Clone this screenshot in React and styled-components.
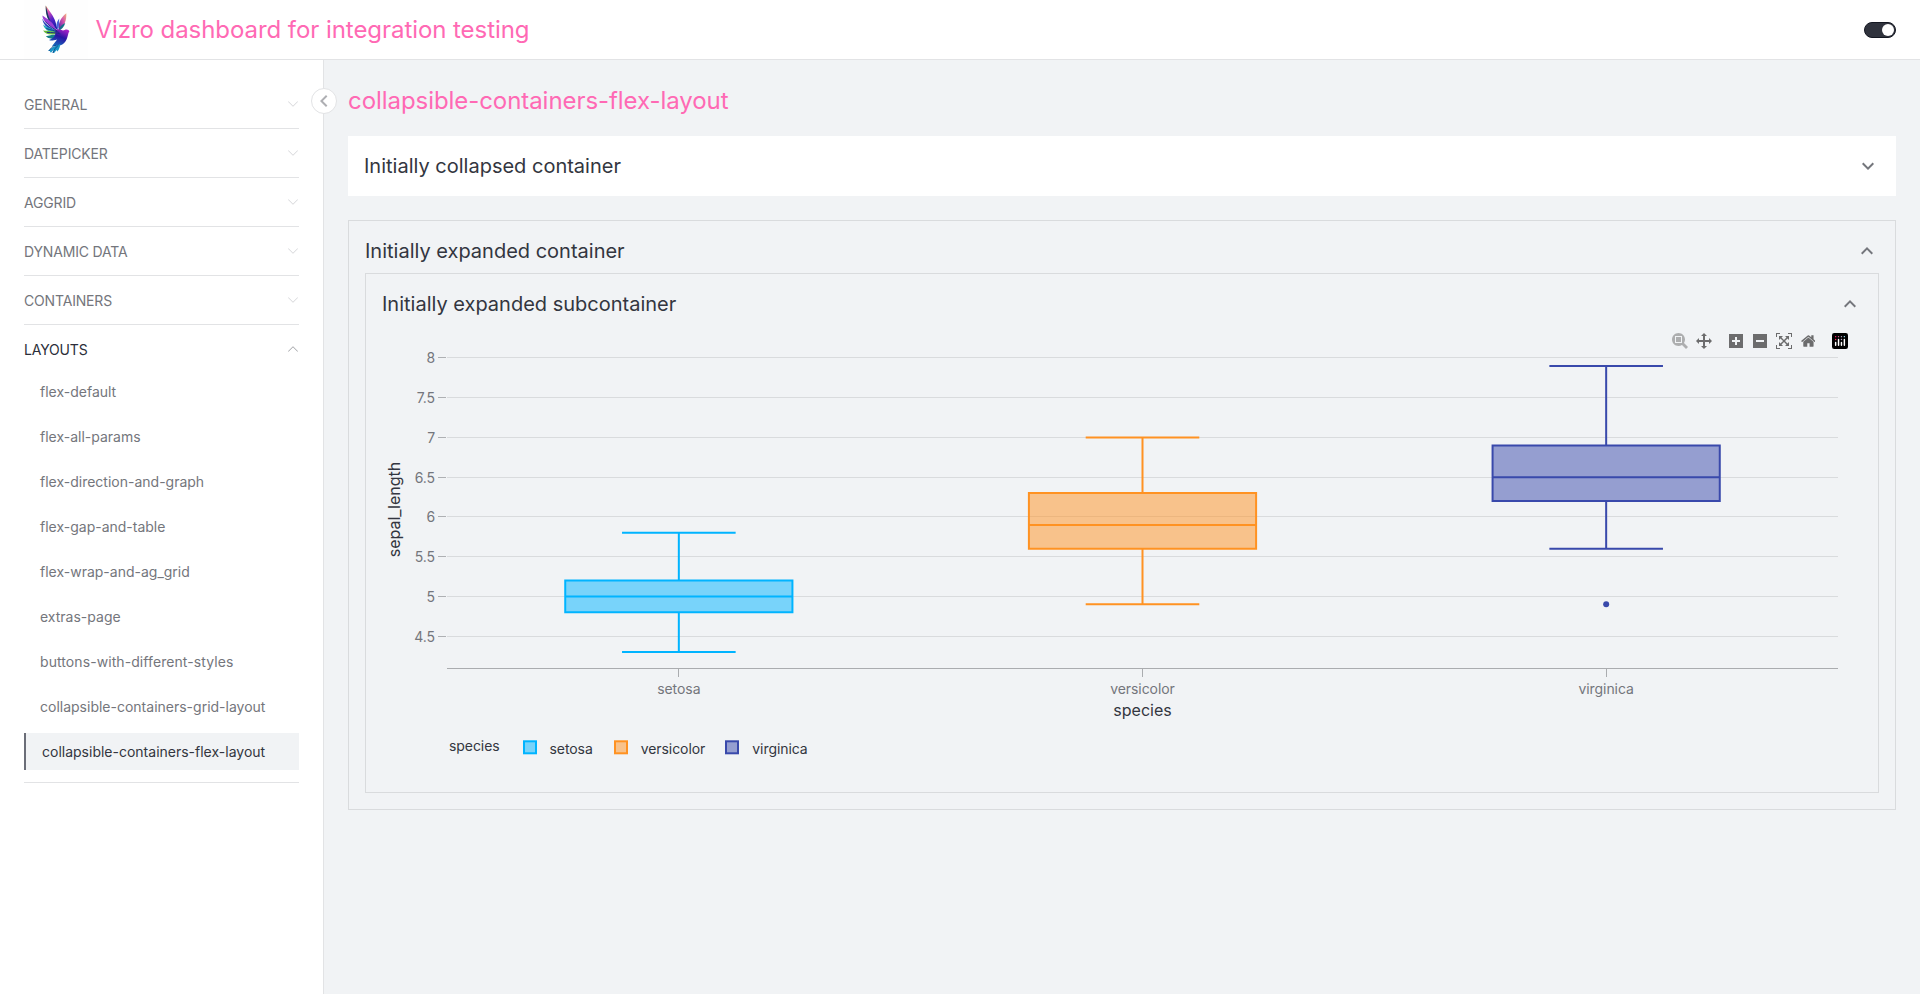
import React from "react";
import styled, { createGlobalStyle } from "styled-components";

const GlobalStyle = createGlobalStyle`
  *, *::before, *::after { box-sizing: border-box; }
  html, body { margin: 0; padding: 0; background: #f1f3f5; }
  body, text { font-family: Inter, "Liberation Sans", sans-serif; font-weight: 400; }
`;

const Page = styled.div`
  height: 994px;
  display: flex;
  flex-direction: column;
  color: #333640;
  background: #f1f3f5;
  overflow: hidden;
`;

const Header = styled.header`
  height: 60px;
  flex: none;
  display: flex;
  align-items: center;
  justify-content: space-between;
  padding: 0 24px;
  background: #ffffff;
  border-bottom: 1px solid #e2e3e5;
`;

const Brand = styled.div`
  display: flex;
  align-items: center;
  gap: 7.5px;
`;

const Logo = styled.svg`
  width: 64px;
  height: 59px;
  background: #fefefe;
`;

const Title = styled.h1`
  margin: 0;
  font-size: 24px;
  line-height: 32px;
  font-weight: 400;
  letter-spacing: -0.06px;
  color: #ff69b4;
`;

const Toggle = styled.div`
  width: 32px;
  height: 16px;
  padding: 1px;
  display: flex;
  justify-content: flex-end;
  border: 1px solid #141721;
  border-radius: 8px;
  background: #30333d;
`;

const Knob = styled.div`
  width: 12px;
  height: 12px;
  border-radius: 50%;
  background: #ffffff;
`;

const Body = styled.div`
  flex: 1;
  display: flex;
  min-height: 0;
`;

const Sidebar = styled.nav`
  position: relative;
  width: 324px;
  flex: none;
  padding: 20px 24px 0;
  background: #ffffff;
  border-right: 1px solid #e2e3e5;
`;

const CollapseButton = styled.button`
  position: absolute;
  top: 28px;
  right: -14px;
  width: 26px;
  height: 26px;
  padding: 0;
  display: flex;
  align-items: center;
  justify-content: center;
  border: 1px solid #e2e3e5;
  border-radius: 50%;
  background: #ffffff;
  color: #aeafb3;
`;

const NavSection = styled.section`
  border-bottom: 1px solid #e2e3e5;
  padding-bottom: ${(p) => (p.$open ? 12 : 0)}px;
`;

const NavHeading = styled.div`
  height: 48px;
  display: flex;
  align-items: center;
  justify-content: space-between;
  font-size: 14px;
  line-height: 20px;
  letter-spacing: -0.17px;
  color: ${(p) => (p.$open ? "#2b2e39" : "#74767c")};
`;

const NavLabel = styled.span`
  padding-top: 2px;
`;

const NavChevron = styled.svg`
  width: 12px;
  height: 12px;
  fill: ${(p) => (p.$open ? "#a0a1a5" : "#d5d6d9")};
  transform: ${(p) => (p.$open ? "rotate(180deg)" : "none")};
`;

const NavList = styled.div`
  display: flex;
  flex-direction: column;
  gap: 8px;
`;

const NavItem = styled.a`
  height: 37px;
  display: flex;
  align-items: center;
  padding: 1px 0 0 16px;
  font-size: 14px;
  line-height: 20px;
  letter-spacing: ${(p) => (p.$wide ? 0.08 : 0)}px;
  color: ${(p) => (p.$active ? "#333640" : "#74767c")};
  background: ${(p) => (p.$active ? "#f1f3f5" : "transparent")};
  border-left: ${(p) => (p.$active ? "2px solid #6b6e78" : "none")};
`;

const Main = styled.main`
  flex: 1;
  padding: 25px 24px 0;
`;

const PageTitle = styled(Title)`
  margin-bottom: 19px;
`;

const Stack = styled.div`
  display: flex;
  flex-direction: column;
  gap: 24px;
`;

const Container = styled.section`
  padding: 16px;
  background: ${(p) => (p.$filled ? "#ffffff" : "transparent")};
  border: ${(p) => (p.$filled ? "none" : "1px solid #d9dbdd")};
`;

const ContainerHeading = styled.div`
  height: 28px;
  display: flex;
  align-items: center;
  justify-content: space-between;
  margin-bottom: ${(p) => (p.$open ? 8 : 0)}px;
  font-size: 20px;
  line-height: 28px;
  color: #333640;
`;

const Icon24 = styled.svg`
  width: 24px;
  height: 24px;
  flex: none;
  fill: ${(p) => p.$color || "#74767c"};
`;

const Graph = styled.div`
  position: relative;
  height: 450px;
`;

const Plot = styled.svg`
  display: block;
  width: 1480px;
  height: 450px;
`;

const Modebar = styled.div`
  position: absolute;
  top: 7px;
  right: 10px;
  display: flex;
  gap: 8px;
`;

const ModeGroup = styled.div`
  display: flex;
`;

const ModeCell = styled.span`
  width: 24px;
  display: flex;
  justify-content: center;
`;

const ModeIcon = styled.svg`
  display: block;
  height: 16px;
  width: ${(p) => p.$w}px;
  fill: ${(p) => (p.$faded ? "#adaeaf" : "#6c6c6d")};
`;

const TickText = styled.text`
  font-size: 14px;
  letter-spacing: -0.07px;
  fill: #74767c;
`;

const AxisTitle = styled.text`
  font-size: 16px;
  fill: #333640;
  text-anchor: middle;
`;

const LegendText = styled.text`
  font-size: 14px;
  letter-spacing: -0.07px;
  fill: #333640;
`;

const SECTIONS = ["GENERAL", "DATEPICKER", "AGGRID", "DYNAMIC DATA", "CONTAINERS"];
const PAGES = [
  "flex-default",
  "flex-all-params",
  "flex-direction-and-graph",
  "flex-gap-and-table",
  "flex-wrap-and-ag_grid",
  "extras-page",
  "buttons-with-different-styles",
  "collapsible-containers-grid-layout",
  "collapsible-containers-flex-layout",
];
const WIDE_PAGE = "buttons-with-different-styles";

const ARROW_DOWN = "M7.41 8.59 12 13.17l4.59-4.58L18 10l-6 6-6-6z";
const ARROW_UP = "M7.41 15.41 12 10.83l4.59 4.58L18 14l-6-6-6 6z";
const ARROW_LEFT = "M15.41 7.41 14 6l-6 6 6 6 1.41-1.41L10.83 12z";

const MODE_ICONS = {
  zoom: { w: 1000, d: "m1000-25l-250 251c40 63 63 138 63 218 0 224-182 406-407 406-224 0-406-182-406-406s183-406 407-406c80 0 155 22 218 62l250-250 125 125z m-812 250l0 438 437 0 0-438-437 0z m62 375l313 0 0-312-313 0 0 312z" },
  pan: { w: 1000, d: "m1000 350l-187 188 0-125-250 0 0 250 125 0-188 187-187-187 125 0 0-250-250 0 0 125-188-188 186-187 0 125 252 0 0-250-125 0 187-188 188 188-125 0 0 250 250 0 0-126 187 188z" },
  plus: { w: 875, d: "m1 787l0-875 875 0 0 875-875 0z m687-500l-187 0 0-187-125 0 0 187-188 0 0 125 188 0 0 187 125 0 0-187 187 0 0-125z" },
  minus: { w: 875, d: "m0 788l0-876 875 0 0 876-875 0z m688-500l-500 0 0 125 500 0 0-125z" },
  autoscale: { w: 1000, d: "m250 850l-187 0-63 0 0-62 0-188 63 0 0 188 187 0 0 62z m688 0l-188 0 0-62 188 0 0-188 62 0 0 188 0 62-62 0z m-875-938l0 188-63 0 0-188 0-62 63 0 187 0 0 62-187 0z m875 188l0-188-188 0 0-62 188 0 62 0 0 62 0 188-62 0z m-125 188l-1 0-93-94-156 156 156 156 92-93 2 0 0 250-250 0 0-2 93-92-156-156-156 156 94 92 0 2-250 0 0-250 0 0 93 93 157-156-157-156-93 94 0 0 0-250 250 0 0 0-94 93 156 157 156-157-93-93 0 0 250 0 0 250z" },
  home: { w: 928.6, d: "m786 296v-267q0-15-11-26t-25-10h-214v214h-143v-214h-214q-15 0-25 10t-11 26v267q0 1 0 2t0 2l321 264 321-264q1-1 1-4z m124 39l-34-41q-5-5-12-6h-2q-7 0-12 3l-386 322-386-322q-7-4-13-4-7 2-12 7l-35 41q-4 5-3 13t6 12l401 334q18 15 42 15t43-15l136-114v109q0 8 5 13t13 5h107q8 0 13-5t5-13v-227l122-102q5-5 6-12t-4-13z" },
};

function ModeButton({ name, faded }) {
  const { w, d } = MODE_ICONS[name];
  return (
    <ModeCell>
      <ModeIcon $w={(w * 16) / 1000} $faded={faded} viewBox={`0 0 ${w} 1000`}>
        <path d={d} transform="matrix(1 0 0 -1 0 850)" />
      </ModeIcon>
    </ModeCell>
  );
}

function PlotlyLogo() {
  return (
    <ModeCell>
      <ModeIcon $w={16} viewBox="0 0 132 132">
        <rect width="132" height="132" rx="18" fill="#000" />
        <circle cx="102" cy="30" r="6" fill="#9EF" />
        <circle cx="78" cy="30" r="6" fill="#BAC" />
        <circle cx="78" cy="54" r="6" fill="#BAC" />
        <circle cx="54" cy="30" r="6" fill="#D69" />
        <circle cx="30" cy="30" r="6" fill="#F26" />
        <circle cx="30" cy="54" r="6" fill="#F26" />
        <g stroke="#fff" strokeWidth="12" strokeLinecap="round">
          <path d="M30 78v24M54 54v48M78 78v24M102 54v48" />
        </g>
      </ModeIcon>
    </ModeCell>
  );
}

function BirdLogo() {
  return (
    <Logo viewBox="-6 0 64 59">
      <defs>
        <linearGradient id="tall" x1="0" y1="0" x2="0.4" y2="1">
          <stop offset="0" stopColor="#f6b06a" />
          <stop offset="0.3" stopColor="#d94fb5" />
          <stop offset="0.65" stopColor="#5b21c9" />
          <stop offset="1" stopColor="#1e1fa8" />
        </linearGradient>
        <linearGradient id="right" x1="1" y1="0" x2="0" y2="1">
          <stop offset="0" stopColor="#f5b37c" />
          <stop offset="0.45" stopColor="#cf4fb0" />
          <stop offset="1" stopColor="#3c1fae" />
        </linearGradient>
        <linearGradient id="body" x1="0.7" y1="0" x2="0.2" y2="1">
          <stop offset="0" stopColor="#a11fc6" />
          <stop offset="0.4" stopColor="#2a14a4" />
          <stop offset="1" stopColor="#1477c0" />
        </linearGradient>
      </defs>
      <g transform="matrix(1.08 0 0 1 2.3 0)">
        <path d="M12.5 5.5C15.5 11 20 16 21.5 22L23.5 30 18 26C14.5 20 12.2 13 12.5 5.5z" fill="url(#tall)" />
        <path d="M12.5 5.5C12 13 14 20 18 25L15 16z" fill="#173a63" />
        <path d="M9.3 15.5C14 19 20 22 22.5 31L14 24C11 21.5 9.7 19 9.3 15.5z" fill="#9a3fd4" />
        <path d="M9.3 18.5C11 23.5 16 26.5 23 31.5L16 29C12 26.5 9.6 22.5 9.3 18.5z" fill="#2540bd" />
        <path d="M10 24.5C14 28 19 28.5 25 32.5L16 31.5C12.5 30 10.8 27.5 10 24.5z" fill="#1fa5b9" />
        <path d="M10 30.5C15 31 20 30.5 26.5 34L18 34.5C14 34.5 11.5 33 10 30.5z" fill="#65b83a" />
        <path d="M12.5 36.2C17 35 21 34 27 35.5L20 38.5C17 39 14.5 38 12.5 36.2z" fill="#147e8b" />
        <path d="M31.5 13.3C31.8 20 30 26 24.5 30.5C23.5 24 26 18 31.5 13.3z" fill="url(#right)" />
        <path d="M25 18.5C24.5 22 25.5 26 23.5 29.5C21.5 25.5 22.5 21.5 25 18.5z" fill="#4b63d7" />
        <path d="M30.5 23C29.5 27 27 29.5 24 31C25 27 27.5 24.5 30.5 23z" fill="#176f8a" />
        <path d="M21 30C25 28 27 31.5 30 30C32 28.8 34 30 34.3 31.5C32.8 33 33.3 39 29.5 43C26 46.5 21.5 46 18 46.5L23 39.5C18.5 41 17 40.8 15.5 40C20 38 22.5 35 21 30z" fill="url(#body)" />
        <path d="M24 45C20.5 46 17 48 14.5 51C18 50.5 15.5 52.5 17.5 52.5L20 49.5C19 52 18 53 20.2 53L22.5 50L23.2 51.5C25.5 48.5 25.5 46.5 26 44z" fill="#1895c7" />
        <path d="M22 45C18.5 46 16.5 49 15.5 51M24 45.5C21 47.5 20.5 50 19 53" stroke="#123a80" strokeWidth="0.7" fill="none" />
        <path d="M12 21.5C15 25.5 19 28 23 31M13.5 32.5C18 32.5 22 32.5 26 34M13 28.5C17 30 20 30.5 25 32.5" stroke="#1b2b86" strokeWidth="0.9" fill="none" />
      </g>
    </Logo>
  );
}

/* Plot geometry, relative to the graph's own top-left corner. */
const PLOT_LEFT = 65;
const PLOT_RIGHT = 1456;
const CATEGORY_WIDTH = (PLOT_RIGHT - PLOT_LEFT) / 3;
const BOX_HALF = 113.6;
const WHISKER_HALF = 56.8;
const AXIS_Y = 342.5;
const valueY = (v) => 326 - (v - 4.3) * 79.44;

const GRID = [
  ["8", 31.5], ["7.5", 71.5], ["7", 111.5], ["6.5", 151.5],
  ["6", 190.5], ["5.5", 230.5], ["5", 270.5], ["4.5", 310.5],
];

const SPECIES = [
  { name: "setosa", color: "#00b4ff", low: 4.3, q1: 4.8, median: 5, q3: 5.2, high: 5.8, outliers: [], swatch: 141, label: 167.5 },
  { name: "versicolor", color: "#ff9222", low: 4.9, q1: 5.6, median: 5.9, q3: 6.3, high: 7, outliers: [], swatch: 232, label: 258.7 },
  { name: "virginica", color: "#3949ab", low: 5.6, q1: 6.2, median: 6.5, q3: 6.9, high: 7.9, outliers: [4.9], swatch: 343, label: 370.3 },
];

function Box({ s, cx }) {
  const l = cx - BOX_HALF;
  const r = cx + BOX_HALF;
  return (
    <g stroke={s.color} strokeWidth="2" fill="none">
      <path
        fill={s.color}
        fillOpacity="0.5"
        d={`M${l} ${valueY(s.median)}H${r}M${l} ${valueY(s.q1)}H${r}V${valueY(s.q3)}H${l}Z`}
      />
      <path d={`M${cx} ${valueY(s.q1)}V${valueY(s.low)}M${cx} ${valueY(s.q3)}V${valueY(s.high)}`} />
      <path d={`M${cx - WHISKER_HALF} ${valueY(s.low)}h${WHISKER_HALF * 2}M${cx - WHISKER_HALF} ${valueY(s.high)}h${WHISKER_HALF * 2}`} />
      {s.outliers.map((o) => (
        <circle key={o} cx={cx} cy={valueY(o)} r="3" fill={s.color} stroke="none" />
      ))}
    </g>
  );
}

function BoxPlot() {
  return (
    <Plot viewBox="0 0 1480 450">
      {GRID.map(([label, y]) => (
        <g key={label}>
          <path d={`M${PLOT_LEFT} ${y}H${PLOT_RIGHT}`} stroke="#d9dbdd" />
          <path d={`M56 ${y}h8`} stroke="#aeb0b3" />
          <TickText x="53" y={y + 5.3} textAnchor="end">{label}</TickText>
        </g>
      ))}
      <path d={`M${PLOT_LEFT} ${AXIS_Y}H${PLOT_RIGHT}`} stroke="#aaacaf" />
      {SPECIES.map((s, i) => {
        const cx = PLOT_LEFT + CATEGORY_WIDTH * (i + 0.5);
        return (
          <g key={s.name}>
            <path d={`M${Math.floor(cx) + 0.5} 343v8`} stroke="#aaacaf" />
            <TickText x={cx} y="368" textAnchor="middle">{s.name}</TickText>
            <Box s={s} cx={cx} />
            <rect x={s.swatch + 1} y="415.3" width="12" height="12" fill={s.color} fillOpacity="0.5" stroke={s.color} strokeWidth="2" />
            <LegendText x={s.label} y="427.5">{s.name}</LegendText>
          </g>
        );
      })}
      <AxisTitle x="760.5" y="390">species</AxisTitle>
      <AxisTitle transform="translate(18.3 183.5) rotate(-90)">sepal_length</AxisTitle>
      <LegendText x="67" y="424.5">species</LegendText>
    </Plot>
  );
}

function NavArrow({ open }) {
  return (
    <NavChevron $open={open} viewBox="0 0 16 16">
      <path d="M1.646 4.646a.5.5 0 0 1 .708 0L8 10.293l5.646-5.647a.5.5 0 0 1 .708.708l-6 6a.5.5 0 0 1-.708 0l-6-6a.5.5 0 0 1 0-.708z" />
    </NavChevron>
  );
}

function Collapsible({ title, open, filled, children }) {
  return (
    <Container $filled={filled}>
      <ContainerHeading $open={open}>
        <span>{title}</span>
        <Icon24 viewBox="0 0 24 24"><path d={open ? ARROW_UP : ARROW_DOWN} /></Icon24>
      </ContainerHeading>
      {children}
    </Container>
  );
}

export default function App() {
  return (
    <Page>
      <GlobalStyle />
      <Header>
        <Brand>
          <BirdLogo />
          <Title>Vizro dashboard for integration testing</Title>
        </Brand>
        <Toggle><Knob /></Toggle>
      </Header>
      <Body>
        <Sidebar>
          {SECTIONS.map((name) => (
            <NavSection key={name}>
              <NavHeading><NavLabel>{name}</NavLabel><NavArrow /></NavHeading>
            </NavSection>
          ))}
          <NavSection $open>
            <NavHeading $open><NavLabel>LAYOUTS</NavLabel><NavArrow open /></NavHeading>
            <NavList>
              {PAGES.map((page, i) => (
                <NavItem key={page} $active={i === PAGES.length - 1} $wide={page === WIDE_PAGE}>{page}</NavItem>
              ))}
            </NavList>
          </NavSection>
          <CollapseButton>
            <Icon24 $color="#aeafb3" viewBox="0 0 24 24"><path d={ARROW_LEFT} /></Icon24>
          </CollapseButton>
        </Sidebar>
        <Main>
          <PageTitle as="h2">collapsible-containers-flex-layout</PageTitle>
          <Stack>
            <Collapsible title="Initially collapsed container" filled />
            <Collapsible title="Initially expanded container" open>
              <Collapsible title="Initially expanded subcontainer" open>
                <Graph>
                  <BoxPlot />
                  <Modebar>
                    <ModeGroup>
                      <ModeButton name="zoom" faded />
                      <ModeButton name="pan" />
                    </ModeGroup>
                    <ModeGroup>
                      <ModeButton name="plus" />
                      <ModeButton name="minus" />
                      <ModeButton name="autoscale" />
                      <ModeButton name="home" />
                    </ModeGroup>
                    <ModeGroup>
                      <PlotlyLogo />
                    </ModeGroup>
                  </Modebar>
                </Graph>
              </Collapsible>
            </Collapsible>
          </Stack>
        </Main>
      </Body>
    </Page>
  );
}
